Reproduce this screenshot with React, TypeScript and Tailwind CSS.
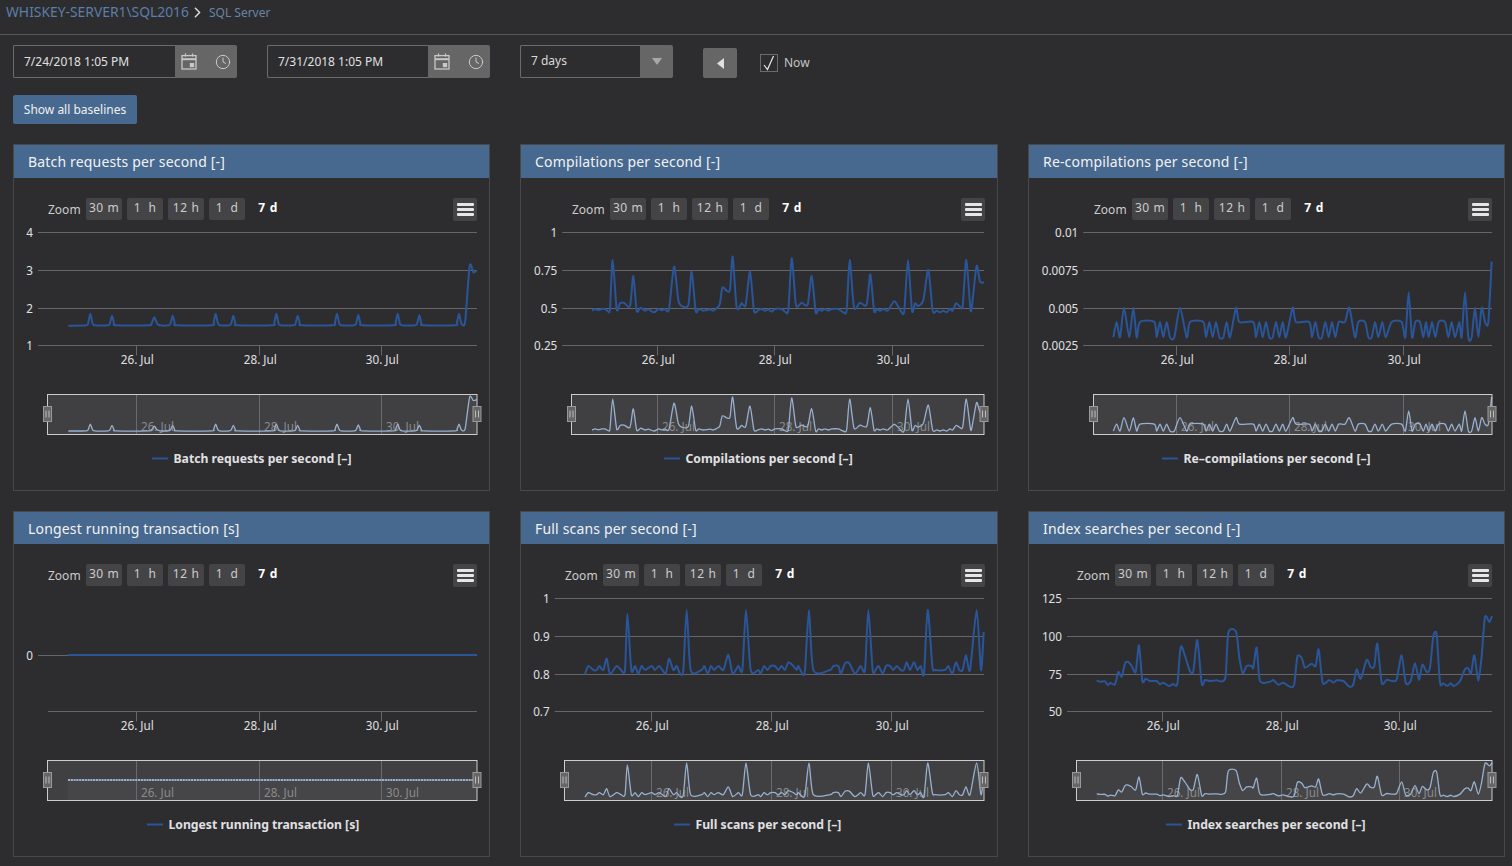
import React from "react";
import { ChevronRight, Clock } from "lucide-react";

type Pt = [number, number];

const toAbs = (ox: number, oy: number, flat: number[]): Pt[] => {
  const out: Pt[] = [];
  for (let i = 0; i < flat.length; i += 2) out.push([ox + flat[i] / 3, oy + flat[i + 1] / 3]);
  return out;
};

const smooth = (p: Pt[]): string => {
  let d = `M${p[0][0].toFixed(2)} ${p[0][1].toFixed(2)}`;
  for (let i = 0; i < p.length - 1; i++) {
    const a = p[Math.max(i - 1, 0)];
    const b = p[i];
    const c = p[i + 1];
    const e = p[Math.min(i + 2, p.length - 1)];
    const k = 8;
    const c1x = b[0] + (c[0] - a[0]) / k;
    const c1y = b[1] + (c[1] - a[1]) / k;
    const c2x = c[0] - (e[0] - b[0]) / k;
    const c2y = c[1] - (e[1] - b[1]) / k;
    d += `C${c1x.toFixed(2)} ${c1y.toFixed(2)} ${c2x.toFixed(2)} ${c2y.toFixed(2)} ${c[0].toFixed(2)} ${c[1].toFixed(2)}`;
  }
  return d;
};

const peaks = (start: number, base: number, list: number[][], tail: number[]): number[] => {
  const out: number[] = [start, base + 1];
  for (const [x, y, w] of list) {
    out.push(x - w, base, x - w / 2, (base * 2 + y) / 3 + 3, x, y, x + w / 2, (base * 2 + y) / 3 + 3, x + w, base);
  }
  return out.concat(tail);
};

const s1 = peaks(
  205,
  316,
  [
    [271, 281, 12],
    [336, 287, 12],
    [463, 292, 17],
    [518, 287, 12],
    [647, 281, 12],
    [700, 287, 12],
    [829, 281, 12],
    [893, 287, 12],
    [1011, 281, 12],
    [1075, 285, 12],
    [1193, 281, 12],
    [1258, 286, 12],
    [1377, 281, 12],
  ],
  [1396, 300, 1409, 138, 1420, 157, 1430, 152],
);

const s2 = [246,272,255,267,265,271,275,267,285,267,295,275,300,265,308,120,320,267,330,250,342,248,360,258,370,168,380,272,392,263,405,272,415,268,432,277,445,267,455,271,465,267,477,268,492,140,505,240,515,258,535,255,545,155,557,272,566,267,580,272,600,268,610,272,625,260,630,250,637,203,650,212,660,208,668,110,680,262,695,250,707,255,720,155,732,272,745,270,755,267,765,272,775,268,785,275,795,267,815,267,825,275,835,270,845,115,857,250,865,258,875,248,893,254,905,168,917,277,925,267,935,272,945,267,955,272,965,267,985,267,1000,277,1010,270,1019,120,1032,262,1050,248,1070,254,1081,163,1092,272,1100,267,1110,272,1120,267,1133,272,1152,244,1165,260,1175,277,1183,272,1194,120,1206,272,1215,250,1225,258,1240,240,1255,150,1268,272,1280,272,1290,277,1300,272,1310,277,1320,267,1328,272,1338,250,1348,258,1358,258,1369,120,1382,272,1390,220,1400,137,1410,185,1422,187];

const s3 = [280,352,290,306,300,352,312,263,328,352,340,263,350,352,360,306,403,306,410,352,420,306,430,352,440,306,450,352,463,352,480,263,500,352,510,306,550,306,558,352,568,306,578,352,588,306,598,352,610,352,620,306,630,352,648,263,658,306,700,306,708,352,718,306,728,352,738,306,748,352,758,352,768,306,778,352,788,306,798,352,818,263,828,306,868,306,876,352,886,306,896,352,906,352,916,306,926,352,936,306,946,352,956,306,975,306,988,263,1005,352,1015,306,1035,306,1045,352,1055,352,1065,306,1075,352,1087,306,1097,352,1115,306,1145,306,1156,352,1166,217,1176,352,1186,306,1200,306,1210,352,1218,306,1226,352,1236,306,1246,352,1256,306,1275,306,1285,352,1295,306,1305,352,1318,306,1325,352,1335,217,1345,352,1355,352,1365,263,1375,352,1385,263,1395,306,1405,306,1415,125];

const s5 = [225,265,235,240,250,252,260,252,268,240,280,252,290,218,300,263,320,240,333,252,345,252,352,83,364,252,375,240,385,263,395,240,405,252,425,240,435,252,448,240,467,263,477,218,490,252,500,240,510,263,520,252,530,72,542,252,575,252,583,240,593,263,603,240,612,252,625,240,640,252,655,207,668,263,685,240,697,252,708,72,722,252,745,252,752,263,762,240,772,252,782,240,795,240,805,252,815,240,825,252,835,229,850,240,860,252,865,240,877,263,885,252,897,72,910,252,960,252,970,240,985,240,993,263,1005,232,1018,232,1035,263,1052,240,1065,252,1075,72,1088,252,1098,250,1106,240,1118,263,1128,240,1140,240,1150,252,1160,240,1172,252,1182,252,1190,229,1200,252,1212,229,1222,252,1232,240,1242,263,1253,72,1267,240,1275,252,1305,252,1315,240,1327,263,1338,229,1348,252,1358,252,1368,207,1380,252,1400,72,1413,252,1421,138];

const s6 = [230,283,240,287,255,286,263,297,272,291,285,295,295,258,305,272,315,232,325,228,335,240,347,258,357,178,367,285,377,278,390,285,410,285,420,295,430,290,447,300,460,294,472,294,482,183,495,210,510,256,520,256,532,162,545,293,555,282,570,285,590,283,605,286,617,270,625,140,648,137,658,215,668,262,680,240,695,240,700,245,710,185,720,285,750,287,760,282,775,296,790,290,805,300,822,298,832,212,845,216,855,245,875,233,887,240,896,190,908,290,928,282,940,290,950,283,970,285,980,295,990,303,1000,295,1010,250,1022,278,1040,222,1052,243,1063,240,1072,173,1085,290,1100,281,1117,285,1130,280,1145,208,1157,290,1172,285,1185,232,1197,282,1207,236,1220,258,1230,245,1240,150,1250,147,1260,290,1270,292,1282,300,1292,292,1302,300,1320,285,1335,250,1345,247,1353,263,1363,208,1375,285,1385,210,1395,93,1408,108,1416,90];

type ChartDef = {
  title: string;
  legend: string;
  x0: number;
  vw: number;
  row: 0 | 1;
  left: number;
  right: number;
  navLeft: number;
  ticks: number[];
  yLabels: (string | null)[];
  points: Pt[];
  flatNav?: number;
  legendX: number;
  zoomPad: string;
};

const c1 = 14;
const c2 = 521;
const c3 = 1029;

const charts: ChartDef[] = [
  { title: "Batch requests per second [-]", legend: "Batch requests per second [–]", x0: c1, vw: 475, row: 0, left: 38, right: 477, navLeft: 47.5, ticks: [136.5, 259.5, 381.5], yLabels: ["4", "3", "2", "1"], points: toAbs(0, 220, s1), legendX: 152, zoomPad: "pl-[34px]" },
  { title: "Compilations per second [-]", legend: "Compilations per second [–]", x0: c2, vw: 476, row: 0, left: 562.3, right: 984, navLeft: 571.5, ticks: [657.5, 774.5, 892.5], yLabels: ["1", "0.75", "0.5", "0.25"], points: toAbs(510, 220, s2), legendX: 664, zoomPad: "pl-[51px]" },
  { title: "Re-compilations per second [-]", legend: "Re–compilations per second [–]", x0: c3, vw: 475, row: 0, left: 1083.3, right: 1492, navLeft: 1093.5, ticks: [1176.5, 1289.5, 1403.5], yLabels: ["0.01", "0.0075", "0.005", "0.0025"], points: toAbs(1020, 220, s3), legendX: 1162, zoomPad: "pl-[65px]" },
  { title: "Longest running transaction [s]", legend: "Longest running transaction [s]", x0: c1, vw: 475, row: 1, left: 48, right: 477, navLeft: 47.5, ticks: [136.5, 259.5, 381.5], yLabels: [null, null, "0", null], points: [[68, 655], [477, 655]], flatNav: 780, legendX: 147, zoomPad: "pl-[34px]" },
  { title: "Full scans per second [-]", legend: "Full scans per second [–]", x0: c2, vw: 476, row: 1, left: 554.7, right: 984, navLeft: 564.5, ticks: [651.5, 771.5, 891.5], yLabels: ["1", "0.9", "0.8", "0.7"], points: toAbs(510, 586, s5), legendX: 674, zoomPad: "pl-[44px]" },
  { title: "Index searches per second [-]", legend: "Index searches per second [–]", x0: c3, vw: 475, row: 1, left: 1067, right: 1492, navLeft: 1076.5, ticks: [1162.5, 1281.5, 1399.5], yLabels: ["125", "100", "75", "50"], points: toAbs(1020, 586, s6), legendX: 1166, zoomPad: "pl-[48px]" },
];

const gridY = [
  [232.5, 270.5, 308.5, 345.5],
  [598.5, 636.5, 674.5, 711.5],
];

const TICK_NAMES = ["26. Jul", "28. Jul", "30. Jul"];
const LINE = "#2a5598";

function ChartSvg({ c }: { c: ChartDef }) {
  const gy = gridY[c.row];
  const flat = c.flatNav !== undefined;
  const bottom = gy[3];
  const navTop = c.row === 0 ? 394.5 : 760.5;
  const navBottom = navTop + 40;
  const y0 = c.row === 0 ? 222 : 588;
  const ys = c.points.map((p) => p[1]);
  const min = Math.min(...ys);
  const max = Math.max(...ys);
  const navPts: Pt[] = c.points.map((p) => [
    p[0],
    flat ? (c.flatNav as number) : navTop + 2.5 + ((p[1] - min) / (max - min)) * 34,
  ]);
  const navPath = smooth(navPts);
  const lastX = navPts[navPts.length - 1][0];
  const firstX = navPts[0][0];
  const handles = [c.navLeft, c.right];
  return (
    <svg className="block w-full" height={268} viewBox={`${c.x0} ${y0} ${c.vw} 268`} preserveAspectRatio="xMinYMin meet">
      {gy.map((y, i) =>
        !flat || i === 3 ? <line key={i} x1={c.left} x2={c.right} y1={y} y2={y} stroke="#666668" strokeWidth={1} /> : null,
      )}
      {flat && <line x1={38} x2={c.right} y1={655.5} y2={655.5} stroke="#666668" strokeWidth={1} />}
      {c.yLabels.map((t, i) =>
        t === null ? null : (
          <text key={i} x={(flat ? 38 : c.left) - 5} y={(flat ? 655.5 : gy[i]) + 4.5} textAnchor="end" fontSize={11.7} fill="#e0e0e3">
            {t}
          </text>
        ),
      )}
      {c.ticks.map((x, i) => (
        <g key={i}>
          <line x1={x} x2={x} y1={bottom} y2={bottom + 10} stroke="#666668" strokeWidth={1} />
          <text x={x + 0.8} y={bottom + 18.5} textAnchor="middle" fontSize={11.7} fill="#e0e0e3">
            {TICK_NAMES[i]}
          </text>
        </g>
      ))}
      <path d={smooth(c.points)} fill="none" stroke={LINE} strokeWidth={2} strokeLinejoin="round" />

      <rect x={c.navLeft} y={navTop} width={c.right - c.navLeft} height={40} fill="#404042" />
      <path d={`${navPath}L${lastX} ${navBottom}L${firstX} ${navBottom}Z`} fill="#ffffff" fillOpacity={0.035} />
      {c.ticks.map((x, i) => (
        <g key={i}>
          <line x1={x} x2={x} y1={navTop} y2={navBottom} stroke="#6a6a6c" strokeWidth={1} />
          <text x={x + 4.5} y={navTop + 36} fontSize={11.7} fill="#8b8b8b">
            {TICK_NAMES[i]}
          </text>
        </g>
      ))}
      <path d={navPath} fill="none" stroke="#98b0d0" strokeWidth={flat ? 1.8 : 1.3} strokeDasharray={flat ? "2.2 0.6" : undefined} />
      <rect x={c.navLeft} y={navTop} width={c.right - c.navLeft} height={40} fill="none" stroke="#cccccc" strokeWidth={1} />
      {handles.map((x, i) => (
        <g key={i}>
          <rect x={x - 4} y={navTop + 12} width={8} height={15} fill="#666666" stroke="#999999" strokeWidth={1} />
          <line x1={x - 1.5} x2={x - 1.5} y1={navTop + 16} y2={navTop + 23} stroke="#bbbbbb" strokeWidth={1} />
          <line x1={x + 1.5} x2={x + 1.5} y1={navTop + 16} y2={navTop + 23} stroke="#bbbbbb" strokeWidth={1} />
        </g>
      ))}
      <line x1={c.legendX} x2={c.legendX + 16} y1={bottom + 113} y2={bottom + 113} stroke={LINE} strokeWidth={2} />
      <text x={c.legendX + 21.5} y={bottom + 117.3} fontSize={12.2} fontWeight={700} fill="#e0e0e3">
        {c.legend}
      </text>
    </svg>
  );
}

function ZoomBtn({ label }: { label: string }) {
  return (
    <div className="flex h-[22px] w-[36px] items-center justify-center rounded-[2px] bg-[#444446] pb-[2px] pl-[1px] text-[12px] tracking-[0.6px] whitespace-pre text-[#cccccc]">
      {label}
    </div>
  );
}

function ChartCard({ c }: { c: ChartDef }) {
  return (
    <div className={`border border-[#48484a] ${c.row === 0 ? "h-[347px]" : "h-[346px]"}`}>
      <div className={`flex items-center bg-[#47688f] pl-[14px] text-[14px] tracking-[0.17px] text-[#f2f2f2] ${c.row === 0 ? "h-[33px]" : "h-[32px]"}`}>
        {c.title}
      </div>
      <div className={`flex h-[44px] items-start pt-[20px] pr-[12px] ${c.zoomPad}`}>
        <span className="mt-[1px] mr-[5px] text-[12px] leading-[22px] text-[#cccccc]">Zoom</span>
        <div className="flex gap-[5px]">
          <ZoomBtn label="30 m" />
          <ZoomBtn label="1  h" />
          <ZoomBtn label="12 h" />
          <ZoomBtn label="1  d" />
          <div className="flex h-[22px] w-[36px] items-center justify-center pb-[2px] pl-[1px] text-[12px] font-bold tracking-[0.8px] text-white">7 d</div>
        </div>
        <div className="ml-auto flex h-[23px] w-[24px] flex-col items-center justify-center gap-[2px] rounded-[2px] bg-[#444446]">
          <div className="h-[3px] w-[17px] rounded-[1px] bg-[#e6e6e6]" />
          <div className="h-[3px] w-[17px] rounded-[1px] bg-[#e6e6e6]" />
          <div className="h-[3px] w-[17px] rounded-[1px] bg-[#e6e6e6]" />
        </div>
      </div>
      <ChartSvg c={c} />
    </div>
  );
}

function CalendarIcon() {
  return (
    <svg width={16} height={17} viewBox="0 0 16 17" fill="none" stroke="#c8c8c8" strokeWidth={1.3}>
      <rect x={1} y={2.6} width={14} height={13.4} />
      <line x1={1} x2={15} y1={6.2} y2={6.2} strokeWidth={2} />
      <line x1={4.5} x2={4.5} y1={0.5} y2={3.5} />
      <line x1={11.5} x2={11.5} y1={0.5} y2={3.5} />
      <rect x={8.8} y={10} width={4.4} height={4.2} fill="#c8c8c8" stroke="none" />
    </svg>
  );
}

function DateField({ value, w }: { value: string; w: string }) {
  return (
    <div className="flex h-[33px]">
      <div className={`flex h-full items-center rounded-l-[2px] border border-r-0 border-[#6b6b6b] pl-[10px] text-[12px] text-[#e0e0e0] ${w}`}>{value}</div>
      <div className="flex h-full w-[62px] items-center gap-[18px] rounded-r-[2px] bg-[#666666] pl-[6px]">
        <CalendarIcon />
        <Clock size={16} strokeWidth={1.4} color="#d0d0d0" />
      </div>
    </div>
  );
}

export default function App() {
  return (
    <div className="h-[866px] overflow-hidden bg-[#2d2d2f] font-['Open_Sans',sans-serif]">
      <div className="flex h-[35px] items-center border-b border-[#58585a] pb-[9px] pl-[6px]">
        <span className="text-[13.85px] text-[#5c7ea8]">WHISKEY-SERVER1\SQL2016</span>
        <ChevronRight size={17} strokeWidth={2.2} color="#d8d8d8" className="mt-[-1px]" />
        <span className="ml-[3px] text-[12px] text-[#6685a8]">SQL Server</span>
      </div>

      <div className="flex items-start pt-[10px] pl-[13px]">
        <DateField value="7/24/2018 1:05 PM" w="w-[162px]" />
        <div className="ml-[30px]">
          <DateField value="7/31/2018 1:05 PM" w="w-[161px]" />
        </div>
        <div className="ml-[30px] flex h-[33px]">
          <div className="flex h-full w-[120px] items-center rounded-l-[2px] border border-r-0 border-[#6b6b6b] pb-[1px] pl-[10px] text-[12px] text-[#d8d8d8]">7 days</div>
          <div className="flex h-full w-[33px] items-center justify-center rounded-r-[2px] bg-[#666666]">
            <svg width={10} height={7} viewBox="0 0 10 7">
              <path d="M0 0H10L5 7Z" fill="#a8a8a8" />
            </svg>
          </div>
        </div>
        <div className="mt-[3px] ml-[30px] flex h-[30px] w-[34px] items-center justify-center rounded-[2px] bg-[#666666]">
          <svg width={7} height={11} viewBox="0 0 7 11">
            <path d="M7 0V11L0 5.5Z" fill="#e0e0e0" />
          </svg>
        </div>
        <div className="mt-[9px] ml-[23px] flex h-[18px] w-[18px] items-center justify-center border border-[#6b6b6b]">
          <svg width={14} height={16} viewBox="0 0 14 16" fill="none" stroke="#e8e8e8" strokeWidth={1.2}>
            <path d="M2 10L5.5 14.5L11.5 1" />
          </svg>
        </div>
        <span className="mt-[9px] ml-[6px] text-[12px] leading-[18px] text-[#c4c4c4]">Now</span>
      </div>

      <div className="pt-[17px] pl-[13px]">
        <div className="flex h-[29px] w-[124px] items-center justify-center rounded-[2px] bg-[#47688f] text-[12px] text-[#f0f0f0]">Show all baselines</div>
      </div>

      <div className="grid grid-cols-[477px_478px_477px] gap-x-[30px] gap-y-[20px] pt-[20px] pl-[13px]">
        {charts.map((c) => (
          <ChartCard key={c.title} c={c} />
        ))}
      </div>
    </div>
  );
}
